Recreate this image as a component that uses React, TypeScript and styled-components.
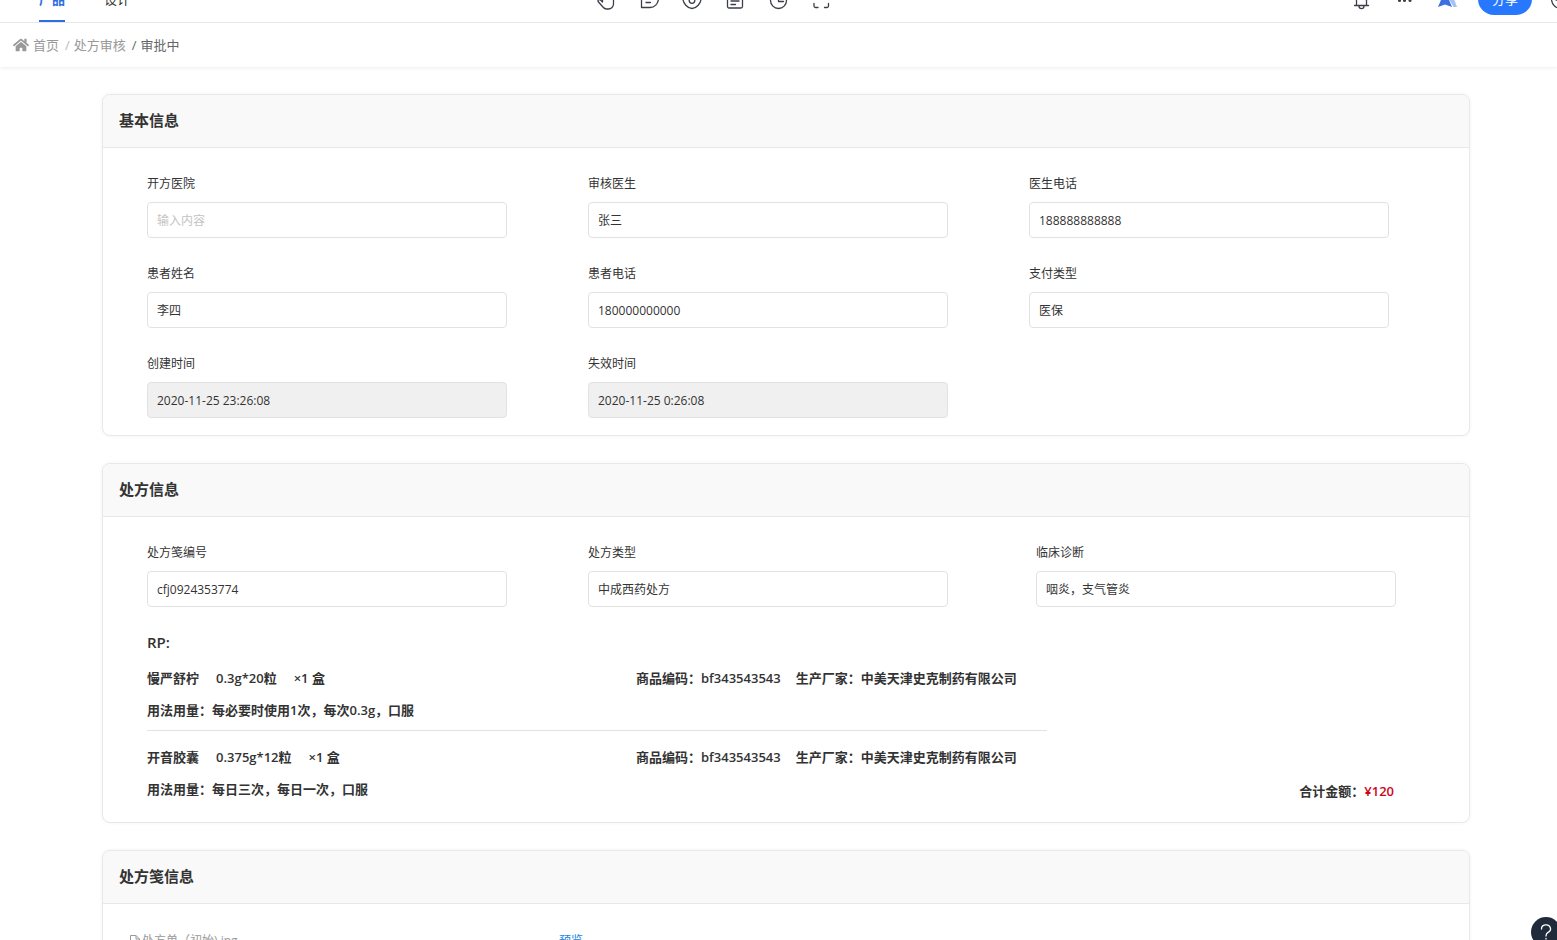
import React, { useId } from "react";
import styled, { createGlobalStyle } from "styled-components";
import { FaHome } from "react-icons/fa";

const GlobalStyle = createGlobalStyle`
  * { box-sizing: border-box; }
  body {
    margin: 0;
    background: #fff;
    color: #333;
    font: 12px/18px "Open Sans", "Noto Sans CJK SC", sans-serif;
  }
  button, input { font: inherit; color: inherit; }
  h2, h3, p, ul, ol { margin: 0; padding: 0; }
  ul, ol { list-style: none; }
`;

const Page = styled.div`
  display: flex;
  flex-direction: column;
  height: 100vh;
  overflow: hidden;
`;

const HeaderClip = styled.header`
  display: flex;
  flex: none;
  align-items: flex-end;
  height: 23px;
  overflow: hidden;
  border-bottom: 1px solid #ececec;
`;

const TopBar = styled.div`
  display: flex;
  flex: 1;
  align-items: center;
  height: 46px;
  min-width: 0;
`;

const Tabs = styled.nav`
  display: flex;
  flex: 0 1 595px;
  gap: 39px;
  height: 46px;
  padding-left: 39px;
`;

const Tab = styled.a<{ $active?: boolean }>`
  display: flex;
  align-items: center;
  height: 46px;
  border-bottom: 2px solid ${(p) => (p.$active ? "#2d6fe0" : "transparent")};
  border-top: 2px solid transparent;
  color: ${(p) => (p.$active ? "#2d6fe0" : "#333")};
  font-size: 13px;
  font-weight: ${(p) => (p.$active ? 700 : 400)};
  text-decoration: none;
`;

const IconGroup = styled.div`
  display: flex;
  flex: none;
  align-items: center;
  gap: 21px;
`;

const Actions = styled.div`
  display: flex;
  flex: none;
  align-items: center;
  gap: 19px;
  margin-left: auto;
  margin-right: -16px;
`;

const IconButton = styled.button`
  display: flex;
  flex: none;
  width: 22px;
  height: 22px;
  padding: 0;
  border: 0;
  background: none;
  color: #3c3f4a;
`;

const ShareButton = styled.button`
  flex: none;
  width: 54px;
  height: 32px;
  padding: 0;
  border: 0;
  border-radius: 16px;
  background: #2878ff;
  color: #fff;
  font-size: 13px;
`;

const Crumbs = styled.nav`
  display: flex;
  flex: none;
  align-items: center;
  height: 44px;
  padding-left: 13px;
  box-shadow: 0 1px 4px rgba(0, 0, 0, 0.08);
  font-size: 13px;
`;

const Crumb = styled.a<{ $current?: boolean }>`
  display: flex;
  align-items: center;
  gap: 4px;
  color: ${(p) => (p.$current ? "#666" : "#999")};
  text-decoration: none;
`;

const Slash = styled.span<{ $dark?: boolean }>`
  padding: 0 4px 0 6px;
  color: ${(p) => (p.$dark ? "#666" : "#bbb")};
`;

const Main = styled.main`
  display: flex;
  flex: 1;
  flex-direction: column;
  gap: 27px;
  min-height: 0;
  padding: 27px 87px 0 102px;
  overflow: hidden;
`;

const CardBox = styled.section`
  flex: none;
  overflow: hidden;
  border: 1px solid #e8e8e8;
  border-radius: 8px;
  background: #fff;
  box-shadow: 0 0 4px rgba(0, 0, 0, 0.05);
`;

const CardTitle = styled.h2`
  height: 53px;
  padding: 0 16px;
  border-bottom: 1px solid #e8e8e8;
  background: #f9f9f9;
  font-size: 15px;
  font-weight: 700;
  line-height: 50px;
`;

const BasicBody = styled.div`
  padding: 27px 80px 17px 44px;
`;

const RxBody = styled.div`
  padding: 27px 73px 21px 44px;
`;

const FileBody = styled.div`
  padding: 28px 27px;
`;

const FieldGrid = styled.div<{ $lastGutter: number }>`
  display: grid;
  grid-template-columns: 1fr 81px 1fr ${(p) => p.$lastGutter}px 1fr;
  row-gap: 27px;
`;

const FieldBox = styled.div`
  display: flex;
  flex-direction: column;
  gap: 9px;
  min-width: 0;
  &:nth-child(3n + 1) { grid-column: 1; }
  &:nth-child(3n + 2) { grid-column: 3; }
  &:nth-child(3n) { grid-column: 5; }
`;

const FieldInput = styled.input`
  width: 100%;
  height: 36px;
  padding: 0 9px;
  border: 1px solid #e2e2e2;
  border-radius: 4px;
  outline: 0;
  background: #fff;
  &::placeholder { color: #c4c4c4; opacity: 1; }
  &:read-only { background: #f0f0f0; }
`;

const RxTitle = styled.h3`
  margin: 25px 0 16px;
  font-size: 15px;
  font-weight: 600;
  line-height: 20px;
`;

const RxLayout = styled.div`
  display: flex;
  align-items: flex-end;
  justify-content: space-between;
  font-size: 13px;
  font-weight: 600;
  line-height: 20px;
`;

const DrugList = styled.ul`
  flex: 0 1 900px;
  padding-bottom: 2px;
`;

const Drug = styled.li`
  & + & {
    margin-top: 10px;
    padding-top: 16px;
    border-top: 1px solid #e2e2e2;
  }
`;

const DrugLine = styled.div`
  display: flex;
  margin-bottom: 12px;
  white-space: nowrap;
`;

const DrugSpec = styled.div`
  display: flex;
  flex: 0 0 489px;
  gap: 17px;
`;

const DrugSource = styled.div`
  display: flex;
  gap: 15px;
`;

const Total = styled.p`
  padding-right: 2px;
  white-space: nowrap;
`;

const Price = styled.strong`
  color: #d0021b;
  font-weight: 600;
`;

const FileRow = styled.div`
  display: flex;
  align-items: center;
`;

const FileName = styled.span`
  display: flex;
  flex: 0 0 429px;
  align-items: center;
  gap: 2px;
  color: #999;
`;

const Preview = styled.a`
  color: #1b82e2;
  text-decoration: none;
`;

const HelpButton = styled.button`
  position: fixed;
  right: -4px;
  bottom: -7px;
  width: 30px;
  height: 30px;
  padding: 0;
  border: 0;
  border-radius: 50%;
  background: #1f2a3b;
  color: #fff;
`;

const toolIcons: { name: string; art: React.ReactNode }[] = [
  { name: "移动", art: <path d="M18.500 4v12a5 5 0 0 1-5 5h-2c-1.700 0-2.600-.8-3.600-2l-4.600-5.200c-1-1.400.9-2.900 2.200-1.800L7.500 14V5a1.500 1.500 0 0 1 3 0V3a1.500 1.500 0 0 1 3 0v1a1.500 1.500 0 0 1 3 0" /> },
  { name: "评论", art: <path d="M3.500 19.500V11a8.500 8.500 0 1 1 17 0c-.5 5-4 8.500-8.500 8.500zM8 14.500h4.500M8 9.500h6" /> },
  { name: "预览", art: <><path d="M2 11c1-4 5-8 9-8s8 4 9 8c0 4-4.500 9.500-9 9.500S2 15 2 11z" /><path d="M8.200 9v3.500a2.800 2.800 0 0 0 5.600 0V9" /></> },
  { name: "备注", art: <><rect x="3.500" y="3.500" width="15" height="16.500" rx="1.500" /><path d="M7 9h8M7 13h8M7 16.500h4.500" /></> },
  { name: "历史", art: <><circle cx="11.500" cy="12.500" r="8" /><path d="M11.500 8v5.500h5" /></> },
  { name: "全屏", art: <path d="M4 15.500V18a1.500 1.500 0 0 0 1.500 1.500H8M18.500 15.500V18a1.500 1.500 0 0 1-1.500 1.500h-2.500M4 8V5a1.500 1.500 0 0 1 1.500-1.500H8M18.500 8V5A1.500 1.500 0 0 0 17 3.500h-2.500" /> },
];

function LineIcon({ children }: { children: React.ReactNode }) {
  return (
    <svg width="22" height="22" viewBox="0 0 22 22" fill="none" stroke="currentColor" strokeWidth="1.3" strokeLinecap="round" strokeLinejoin="round" aria-hidden="true">
      {children}
    </svg>
  );
}

function Field({ label, value, placeholder, readOnly }: { label: string; value?: string; placeholder?: string; readOnly?: boolean }) {
  const id = useId();
  return (
    <FieldBox>
      <label htmlFor={id}>{label}</label>
      <FieldInput id={id} defaultValue={value} placeholder={placeholder} readOnly={readOnly} />
    </FieldBox>
  );
}

const drugs = [
  { name: "慢严舒柠", spec: "0.3g*20粒", usage: "每必要时使用1次，每次0.3g，口服" },
  { name: "开音胶囊", spec: "0.375g*12粒", usage: "每日三次，每日一次，口服" },
];

export default function App() {
  return (
    <Page>
      <GlobalStyle />
      <HeaderClip>
        <TopBar>
          <Tabs>
            <Tab href="#product" $active>产品</Tab>
            <Tab href="#design">设计</Tab>
          </Tabs>
          <IconGroup>
            {toolIcons.map((t) => (
              <IconButton key={t.name} type="button" aria-label={t.name}>
                <LineIcon>{t.art}</LineIcon>
              </IconButton>
            ))}
          </IconGroup>
          <Actions>
            <IconGroup>
              <IconButton type="button" aria-label="通知">
                <LineIcon><path d="M3.500 17.500h14M5.500 17V9a5 5 0 0 1 10 0v8M8 18c0 3.500 5 3.500 5 0" /></LineIcon>
              </IconButton>
              <IconButton type="button" aria-label="更多">
                <svg width="22" height="22" viewBox="0 0 22 22" fill="currentColor" aria-hidden="true">
                  <circle cx="5.500" cy="12.500" r="1.500" /><circle cx="10.500" cy="12.500" r="1.500" /><circle cx="16" cy="12.500" r="1.500" />
                </svg>
              </IconButton>
              <IconButton type="button" aria-label="助手">
                <svg width="22" height="22" viewBox="0 0 22 22" aria-hidden="true">
                  <path d="M11 3h3l6 16h-3.500L10 8z" fill="#a9c2f5" />
                  <path d="M8 2.500L15 19l-7-2.500L1 19z" fill="#3a70e0" />
                </svg>
              </IconButton>
            </IconGroup>
            <ShareButton type="button">分享</ShareButton>
            <IconButton type="button" aria-label="账户">
              <LineIcon><circle cx="10" cy="11" r="9.500" /><path d="M5 12h10" /></LineIcon>
            </IconButton>
          </Actions>
        </TopBar>
      </HeaderClip>

      <Crumbs>
        <Crumb href="#home"><FaHome size={16} aria-hidden="true" />首页</Crumb>
        <Slash>/</Slash>
        <Crumb href="#review">处方审核</Crumb>
        <Slash $dark>/</Slash>
        <Crumb href="#pending" $current>审批中</Crumb>
      </Crumbs>

      <Main>
        <CardBox>
          <CardTitle>基本信息</CardTitle>
          <BasicBody>
            <FieldGrid $lastGutter={81}>
              <Field label="开方医院" placeholder="输入内容" />
              <Field label="审核医生" value="张三" />
              <Field label="医生电话" value="188888888888" />
              <Field label="患者姓名" value="李四" />
              <Field label="患者电话" value="180000000000" />
              <Field label="支付类型" value="医保" />
              <Field label="创建时间" value="2020-11-25 23:26:08" readOnly />
              <Field label="失效时间" value="2020-11-25 0:26:08" readOnly />
            </FieldGrid>
          </BasicBody>
        </CardBox>

        <CardBox>
          <CardTitle>处方信息</CardTitle>
          <RxBody>
            <FieldGrid $lastGutter={88}>
              <Field label="处方笺编号" value="cfj0924353774" />
              <Field label="处方类型" value="中成西药处方" />
              <Field label="临床诊断" value="咽炎，支气管炎" />
            </FieldGrid>
            <RxTitle>RP:</RxTitle>
            <RxLayout>
              <DrugList>
                {drugs.map((d) => (
                  <Drug key={d.name}>
                    <DrugLine>
                      <DrugSpec>
                        <span>{d.name}</span>
                        <span>{d.spec}</span>
                        <span>×1 盒</span>
                      </DrugSpec>
                      <DrugSource>
                        <span>商品编码：bf343543543</span>
                        <span>生产厂家：中美天津史克制药有限公司</span>
                      </DrugSource>
                    </DrugLine>
                    <p>用法用量：{d.usage}</p>
                  </Drug>
                ))}
              </DrugList>
              <Total>合计金额：<Price>¥120</Price></Total>
            </RxLayout>
          </RxBody>
        </CardBox>

        <CardBox>
          <CardTitle>处方笺信息</CardTitle>
          <FileBody>
            <FileRow>
              <FileName>
                <svg width="10" height="14" viewBox="0 0 10 14" fill="none" stroke="currentColor" aria-hidden="true">
                  <path d="M.5 1.500h5.500l3.500 3.500v8.500h-9zM6 1.500V5h3.500" />
                </svg>
                处方单（初始).jpg
              </FileName>
              <Preview href="#preview">预览</Preview>
            </FileRow>
          </FileBody>
        </CardBox>
      </Main>
      <HelpButton type="button" aria-label="帮助">
        <svg width="30" height="30" viewBox="0 0 30 30" fill="none" stroke="currentColor" strokeWidth="1.3" strokeLinecap="round" aria-hidden="true">
          <path d="M10.500 12a4.500 4 0 1 1 6.500 3.400c-1.500.9-2 1.600-2 3.600M15 21.500v.5" />
        </svg>
      </HelpButton>
    </Page>
  );
}
